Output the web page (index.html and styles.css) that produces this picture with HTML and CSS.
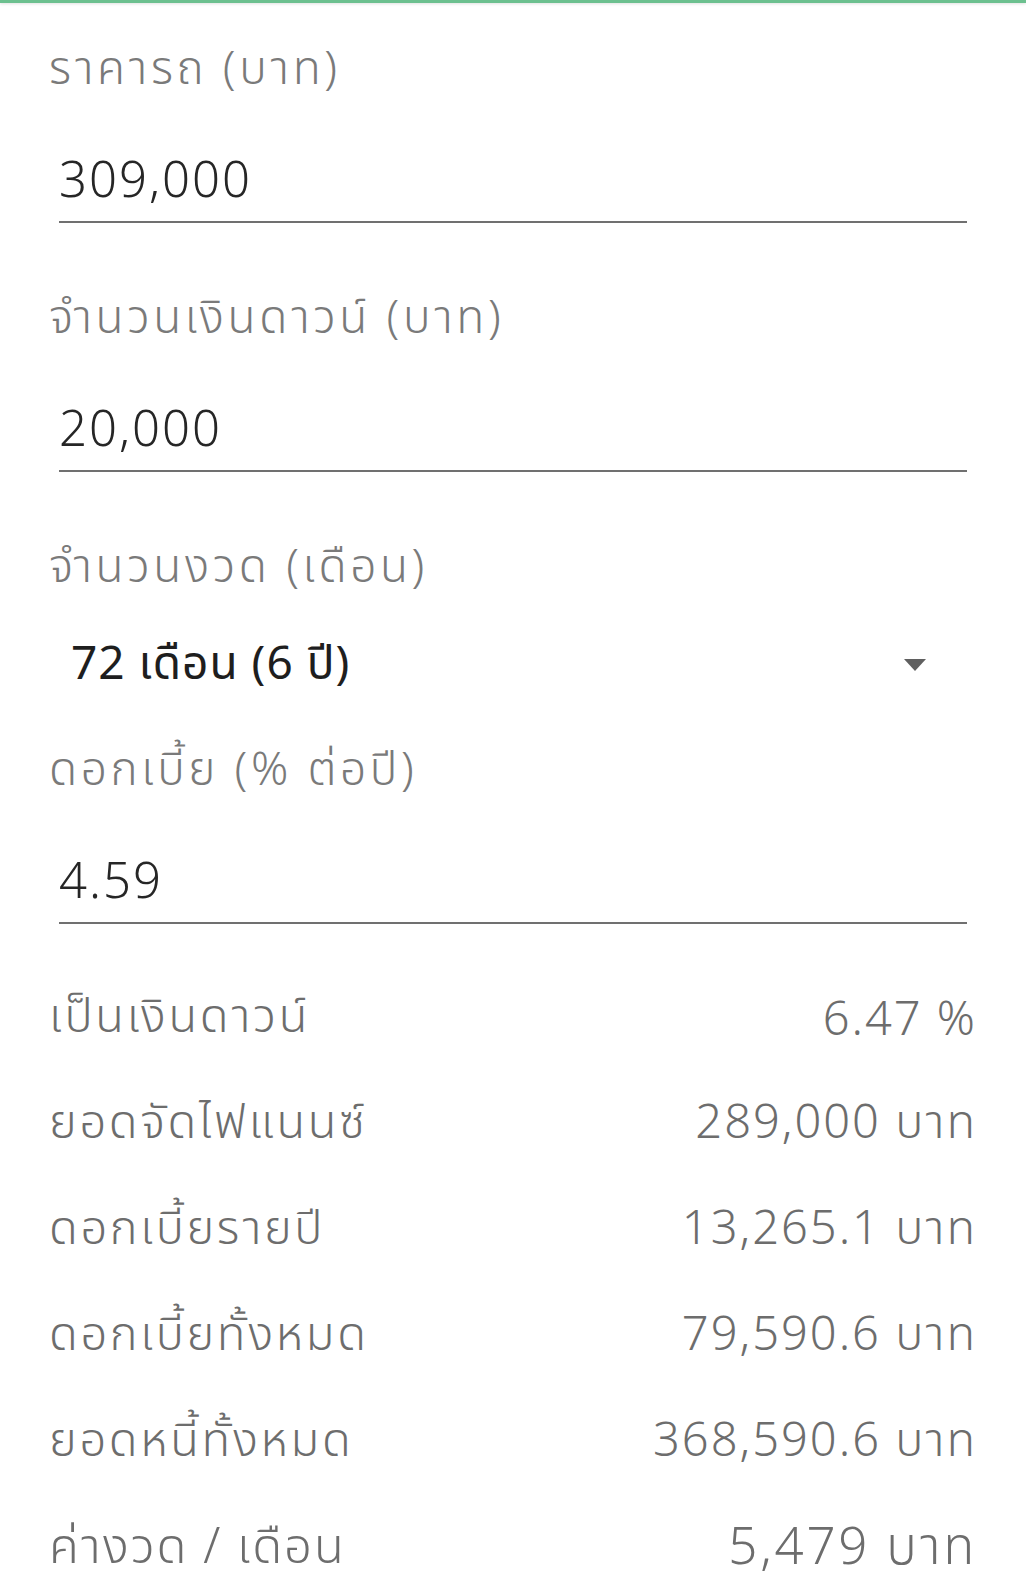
FILE: index.html
```html
<!DOCTYPE html>
<html lang="th">
<head>
<meta charset="utf-8">
<title>คำนวณค่างวด</title>
<link rel="stylesheet" href="styles.css">
</head>
<body>
<div class="topbar"></div>
<main class="form">
  <div class="field">
    <div class="label">ราคารถ (บาท)</div>
    <div class="input">309,000</div>
  </div>
  <div class="field">
    <div class="label">จำนวนเงินดาวน์ (บาท)</div>
    <div class="input">20,000</div>
  </div>
  <div class="field">
    <div class="label">จำนวนงวด (เดือน)</div>
    <div class="select"><span>72 เดือน (6 ปี)</span><span class="arrow"></span></div>
  </div>
  <div class="field">
    <div class="label">ดอกเบี้ย (% ต่อปี)</div>
    <div class="input">4.59</div>
  </div>
  <div class="results">
    <div class="row"><span class="name">เป็นเงินดาวน์</span><span>6.47 %</span></div>
    <div class="row"><span class="name">ยอดจัดไฟแนนซ์</span><span>289,000 บาท</span></div>
    <div class="row"><span class="name">ดอกเบี้ยรายปี</span><span>13,265.1 บาท</span></div>
    <div class="row"><span class="name">ดอกเบี้ยทั้งหมด</span><span>79,590.6 บาท</span></div>
    <div class="row"><span class="name">ยอดหนี้ทั้งหมด</span><span>368,590.6 บาท</span></div>
    <div class="row row-last"><span class="name">ค่างวด / เดือน</span><span>5,479 บาท</span></div>
  </div>
</main>
</body>
</html>
```
FILE: styles.css
```css
html, body {
  margin: 0;
  padding: 0;
  background: #ffffff;
}
body {
  font-family: "Noto Sans", "Noto Sans Thai", "Noto Sans Thai Looped", "Loma", "Garuda", "Waree", sans-serif;
  font-weight: 300;
}
.topbar {
  height: 3px;
  background: #6cc08f;
  box-shadow: 0 1px 3px rgba(0,0,0,0.12);
}
.form {
  padding: 33px 59px 0 49px;
}
.field {
  display: flex;
  flex-direction: column;
  margin-bottom: 62px;
}
.field:nth-child(3) {
  margin-bottom: 42px;
}
.field:nth-child(4) {
  margin-bottom: 40px;
}
.label {
  height: 60px;
  line-height: 60px;
  font-size: 46px;
  letter-spacing: 3.6px;
  color: #7a7a7a;
  white-space: nowrap;
}
.input {
  margin: 52px 0 0 10px;
  height: 60px;
  line-height: 60px;
  padding-bottom: 13px;
  border-bottom: 2px solid #707070;
  font-size: 49px;
  letter-spacing: 2px;
  color: #262626;
}
.select {
  margin: 41px 0 0 22px;
  height: 60px;
  display: flex;
  align-items: center;
  justify-content: space-between;
  font-size: 46px;
  letter-spacing: 1px;
  font-weight: 400;
  color: #1e1e1e;
}
.arrow {
  width: 0;
  height: 0;
  border-left: 11px solid transparent;
  border-right: 11px solid transparent;
  border-top: 12px solid #5f5f5f;
  margin-right: 41px;
}
.results {
  display: flex;
  flex-direction: column;
}
.row {
  height: 106.2px;
  display: flex;
  align-items: center;
  justify-content: space-between;
  font-size: 47px;
  letter-spacing: 2px;
  color: #6d6d6d;
  margin-right: -10px;
  white-space: nowrap;
}
.row .name {
  letter-spacing: 2.7px;
}
.row-last {
  font-size: 51px;
  letter-spacing: 2.8px;
}
.row-last .name {
  font-size: 49px;
  letter-spacing: 2px;
}
```
